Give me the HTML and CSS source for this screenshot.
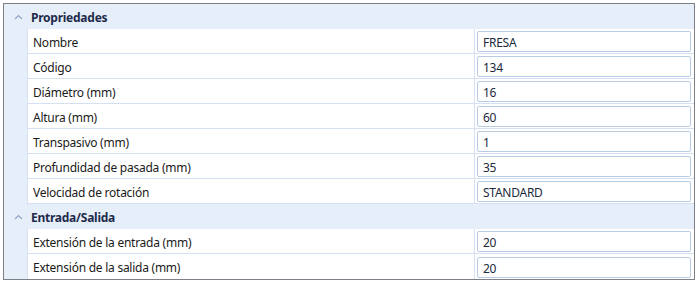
FILE: index.html
```html
<!DOCTYPE html>
<html lang="es">
<head>
    <meta charset="UTF-8">
    <meta name="viewport" content="width=device-width, initial-scale=1.0">
    <title>Propiedades</title>
    <link rel="stylesheet" href="styles.css">
</head>
<body>
    <div class="grid">
        <div class="category">
            <div class="cat-header">
                <span class="toggle"><svg width="9" height="6" viewBox="0 0 9 6"><polyline points="1,5 4.5,1.5 8,5" fill="none" stroke="#8fa4c6" stroke-width="1.2"/></svg></span>
                <span class="cat-title">Propriedades</span>
            </div>
            <div class="row"><div class="gutter"></div><div class="label">Nombre</div><div class="value"><div class="box">FRESA</div></div></div>
            <div class="row"><div class="gutter"></div><div class="label">Código</div><div class="value"><div class="box">134</div></div></div>
            <div class="row"><div class="gutter"></div><div class="label">Diámetro (mm)</div><div class="value"><div class="box">16</div></div></div>
            <div class="row"><div class="gutter"></div><div class="label">Altura (mm)</div><div class="value"><div class="box">60</div></div></div>
            <div class="row"><div class="gutter"></div><div class="label">Transpasivo (mm)</div><div class="value"><div class="box">1</div></div></div>
            <div class="row"><div class="gutter"></div><div class="label">Profundidad de pasada (mm)</div><div class="value"><div class="box">35</div></div></div>
            <div class="row"><div class="gutter"></div><div class="label">Velocidad de rotación</div><div class="value"><div class="box">STANDARD</div></div></div>
        </div>
        <div class="category">
            <div class="cat-header">
                <span class="toggle"><svg width="9" height="6" viewBox="0 0 9 6"><polyline points="1,5 4.5,1.5 8,5" fill="none" stroke="#8fa4c6" stroke-width="1.2"/></svg></span>
                <span class="cat-title">Entrada/Salida</span>
            </div>
            <div class="row"><div class="gutter"></div><div class="label">Extensión de la entrada (mm)</div><div class="value"><div class="box">20</div></div></div>
            <div class="row last"><div class="gutter"></div><div class="label">Extensión de la salida (mm)</div><div class="value"><div class="box">20</div></div></div>
        </div>
    </div>
</body>
</html>
```

FILE: styles.css
```css
body { margin: 0; background: #ffffff; font-family: "Noto Sans", "Open Sans", sans-serif; font-size: 12px; letter-spacing: -0.25px; color: #1a1a1a; }
.grid { margin: 3px; border: 1px solid #7d8088; background: #ffffff; }
.cat-header { display: flex; align-items: center; height: 25px; background: #e6eefa; }
.toggle { width: 27px; display: flex; justify-content: center; align-items: center; padding-left: 2px; box-sizing: border-box; }
.cat-title { font-weight: bold; color: #1e2b4b; padding-top: 2px; }
.row { display: grid; grid-template-columns: 23px 1fr 220px; height: 25px; }
.gutter { background: #e6eefa; }
.label { display: flex; align-items: center; padding: 2px 0 0 5px; border-left: 1px solid #d5e1f2; border-bottom: 1px solid #d5e1f2; }
.value { display: flex; align-items: center; padding: 1px 3px 0 2px; border-left: 1px solid #d5e1f2; border-bottom: 1px solid #d5e1f2; }
.row.last .label, .row.last .value { border-bottom: none; }
.box { flex: 1; height: 21px; box-sizing: border-box; display: flex; align-items: center; padding: 2px 0 0 5px; border: 1px solid #b9cce6; border-radius: 2px; color: #1b2a3d; }
```
